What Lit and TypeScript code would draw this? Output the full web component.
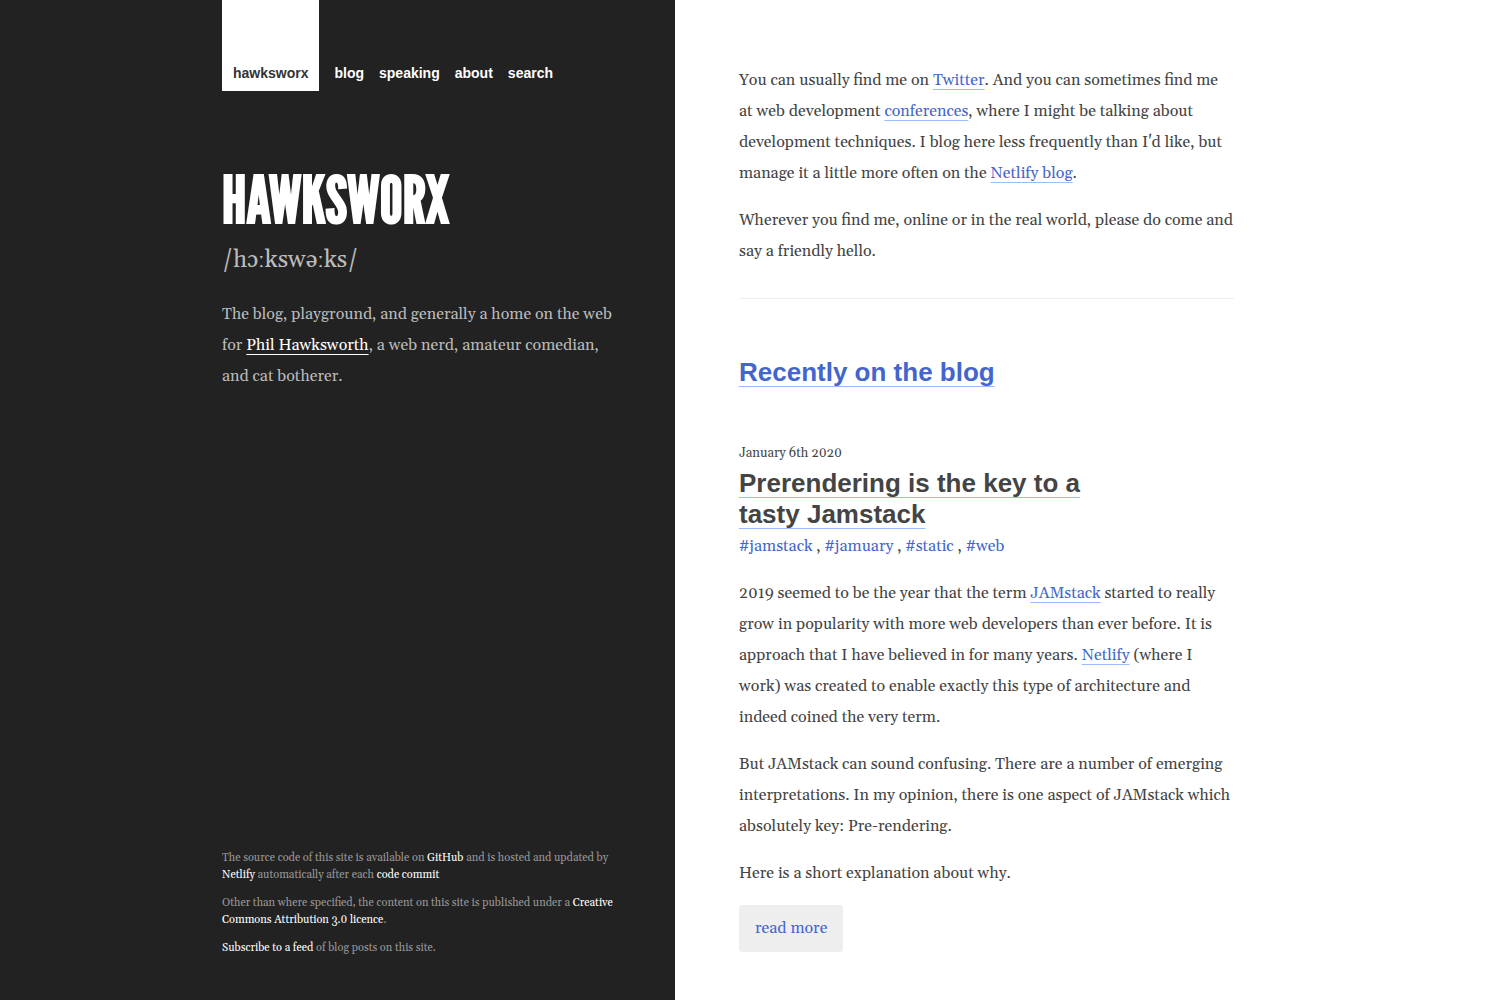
import { LitElement, html, css } from 'lit';
import { customElement } from 'lit/decorators.js';

@customElement('site-intro')
class SiteIntro extends LitElement {
  static styles = css`
    :host {
      display: flex;
      flex-direction: column;
      box-sizing: border-box;
      min-height: 100vh;
      padding: 0 48px 32px max(24px, calc(50vw - 528px));
      background: #222;
      color: #bbb;
    }
    .nav {
      display: flex;
      flex-wrap: wrap;
      align-items: flex-end;
      gap: 15px;
      font: bold 14px/16px 'Liberation Sans', Arial, sans-serif;
    }
    .nav-link {
      padding: 65px 0 10px;
      color: #fff;
      text-decoration: none;
    }
    .nav-link.home {
      padding-left: 11px;
      padding-right: 11px;
      background: #fff;
      color: #333;
    }
    .title {
      margin: 77px 0 0;
      font: bold 64px/64px 'League Gothic', 'Anton', sans-serif;
      color: #fff;
      text-transform: uppercase;
    }
    .phonetic {
      margin: 13px 0 23px;
      font-size: 24px;
      line-height: 31px;
    }
    .lead {
      margin: 0;
    }
    .person {
      color: #fff;
      text-decoration: underline 1px;
      text-underline-offset: 4px;
      text-decoration-skip-ink: none;
    }
    .footer {
      margin-top: auto;
      font-size: 11px;
      line-height: 17px;
      color: #999;
    }
    .note {
      margin: 0 0 11px;
    }
    .note a {
      color: #fff;
      text-decoration: none;
    }
  `;

  render() {
    return html`
      <nav class="nav">
        <a class="nav-link home" href="/">hawksworx</a>
        <a class="nav-link" href="/blog">blog</a>
        <a class="nav-link" href="/speaking">speaking</a>
        <a class="nav-link" href="/about">about</a>
        <a class="nav-link" href="/search">search</a>
      </nav>
      <h1 class="title">Hawksworx</h1>
      <p class="phonetic">/hɔːkswəːks/</p>
      <p class="lead">
        The blog, playground, and generally a home on the web for
        <a class="person" href="/about">Phil Hawksworth</a>, a web nerd, amateur comedian, and cat botherer.
      </p>
      <footer class="footer">
        <p class="note">
          The source code of this site is available on <a href="/source">GitHub</a> and is hosted and updated by
          <a href="/hosting">Netlify</a> automatically after each <a href="/commit">code commit</a>
        </p>
        <p class="note">
          Other than where specified, the content on this site is published under a
          <a href="/licence">Creative Commons Attribution 3.0 licence</a>.
        </p>
        <p class="note"><a href="/feed">Subscribe to a feed</a> of blog posts on this site.</p>
      </footer>
    `;
  }
}

@customElement('site-content')
class SiteContent extends LitElement {
  static styles = css`
    :host {
      display: block;
      padding: 65px 64px 48px;
      color: #444;
    }
    .column {
      max-width: 495px;
    }
    p {
      margin: 0 0 16px;
    }
    a {
      color: #46c;
      text-decoration: underline 1px #9bf;
      text-underline-offset: 4px;
      text-decoration-skip-ink: none;
    }
    .rule {
      margin: 31px 0 58px;
      border: 0;
      border-top: 1px solid #eee;
    }
    .section-title,
    .post-title {
      margin: 0;
      font: bold 26px/31px 'Liberation Sans', Arial, sans-serif;
    }
    .section-title a,
    .post-title a {
      text-underline-offset: 5px;
    }
    .section-title {
      margin-bottom: 50px;
    }
    .post-title {
      max-width: 380px;
    }
    .post-title a {
      color: #444;
    }
    .date {
      display: block;
      font-size: 13px;
      line-height: 30px;
    }
    .tags {
      margin: 1px 0 16px;
    }
    .tags a,
    .more {
      text-decoration: none;
    }
    .more {
      display: inline-block;
      padding: 8px 16px;
      border-radius: 3px;
      background: #eee;
    }
  `;

  tags = ['jamstack', 'jamuary', 'static', 'web'];

  render() {
    return html`
      <div class="column">
        <p>
          You can usually find me on <a href="/twitter">Twitter</a>. And you can sometimes find me at web development
          <a href="/speaking">conferences</a>, where I might be talking about development techniques. I blog here less
          frequently than I'd like, but manage it a little more often on the <a href="/netlify-blog">Netlify blog</a>.
        </p>
        <p>Wherever you find me, online or in the real world, please do come and say a friendly hello.</p>
        <hr class="rule" />
        <h2 class="section-title"><a href="/blog">Recently on the blog</a></h2>
        <article>
          <time class="date" datetime="2020-01-06">January 6th 2020</time>
          <h3 class="post-title"><a href="/blog/prerendering">Prerendering is the key to a tasty Jamstack</a></h3>
          <div class="tags">
            ${this.tags.map((tag, i) => html`${i ? ' , ' : ''}<a href="/tags/${tag}">#${tag}</a>`)}
          </div>
          <p>
            2019 seemed to be the year that the term <a href="/jamstack">JAMstack</a> started to really grow in
            popularity with more web developers than ever before. It is approach that I have believed in for many years.
            <a href="/netlify">Netlify</a> (where I work) was created to enable exactly this type of architecture and
            indeed coined the very term.
          </p>
          <p>
            But JAMstack can sound confusing. There are a number of emerging interpretations. In my opinion, there is
            one aspect of JAMstack which absolutely key: Pre-rendering.
          </p>
          <p>Here is a short explanation about why.</p>
          <a class="more" href="/blog/prerendering">read more</a>
        </article>
      </div>
    `;
  }
}

@customElement('app-root')
class AppRoot extends LitElement {
  static styles = css`
    :host {
      display: grid;
      grid-template-columns: 45% 55%;
      background: #fff;
      font: 16px/31px Gelasio, Georgia, 'Liberation Serif', serif;
    }
  `;

  render() {
    return html`
      <site-intro></site-intro>
      <site-content></site-content>
    `;
  }
}
